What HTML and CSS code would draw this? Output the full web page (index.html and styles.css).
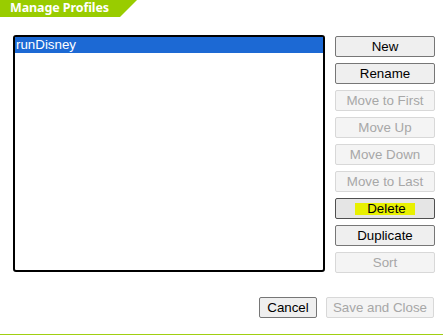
FILE: index.html
```html
<!DOCTYPE html>
<html>
<head>
<meta charset="utf-8">
<link rel="stylesheet" href="styles.css">
</head>
<body>
<div class="header"><div class="tab">Manage Profiles</div></div>
<div class="main">
  <div class="listbox">
    <div class="option selected">runDisney</div>
  </div>
  <div class="actions">
    <button class="btn">New</button>
    <button class="btn">Rename</button>
    <button class="btn" disabled>Move to First</button>
    <button class="btn" disabled>Move Up</button>
    <button class="btn" disabled>Move Down</button>
    <button class="btn" disabled>Move to Last</button>
    <button class="btn hover"><span class="mark">Delete</span></button>
    <button class="btn">Duplicate</button>
    <button class="btn" disabled>Sort</button>
  </div>
</div>
<div class="footer">
  <button class="btn cancel">Cancel</button>
  <button class="btn save" disabled>Save and Close</button>
</div>
<div class="rule"></div>
</body>
</html>
```
FILE: styles.css
```css
html, body {
  margin: 0;
  padding: 0;
  background: #ffffff;
  width: 443px;
  height: 335px;
  overflow: hidden;
  font-family: "Liberation Sans", Arial, sans-serif;
}
.header {
  height: 17px;
}
.tab {
  width: 137px;
  height: 17px;
  background: #99cc00;
  clip-path: polygon(0 0, 137px 0, 120px 17px, 0 17px);
  color: #ffffff;
  font-family: "Noto Sans", sans-serif;
  font-weight: bold;
  font-size: 12.5px;
  line-height: 16px;
  padding-left: 10px;
  box-sizing: border-box;
  letter-spacing: -0.1px;
}
.main {
  display: flex;
  align-items: flex-start;
  margin-top: 18px;
  padding-left: 13px;
  gap: 10px;
}
.listbox {
  width: 312px;
  height: 237px;
  box-sizing: border-box;
  border: 2px solid #000000;
  border-radius: 3px;
  background: #fff;
}
.option {
  height: 16px;
  line-height: 15px;
  font-size: 13.33px;
  padding-left: 1px;
  color: #000;
}
.option.selected {
  background: #1c69d4;
  color: #ffffff;
}
.actions {
  display: flex;
  flex-direction: column;
  gap: 6px;
  margin-top: 1px;
  width: 100px;
}
.btn {
  height: 21px;
  box-sizing: border-box;
  border: 1px solid #767676;
  border-radius: 2px;
  background: #efefef;
  color: #000000;
  font-family: "Liberation Sans", Arial, sans-serif;
  font-size: 13.33px;
  padding: 0;
  margin: 0;
  line-height: 18px;
}
.actions .btn {
  width: 100px;
}
.btn:disabled {
  border-color: #d8d8d8;
  background: #f4f4f4;
  color: #a7a7a7;
}
.btn.hover {
  background: #e5e5e5;
  border-color: #4f4f4f;
}
.mark {
  background: #e8f000;
  padding: 0 9px 0 12px;
  display: inline-block;
  line-height: 12px;
  height: 12px;
}
.footer {
  display: flex;
  justify-content: flex-end;
  gap: 9px;
  margin-top: 24px;
  padding-right: 9px;
}
.cancel {
  width: 58px;
}
.save {
  width: 108px;
}
.rule {
  margin-top: 16px;
  height: 2px;
  background: #a0cf12;
}
```
